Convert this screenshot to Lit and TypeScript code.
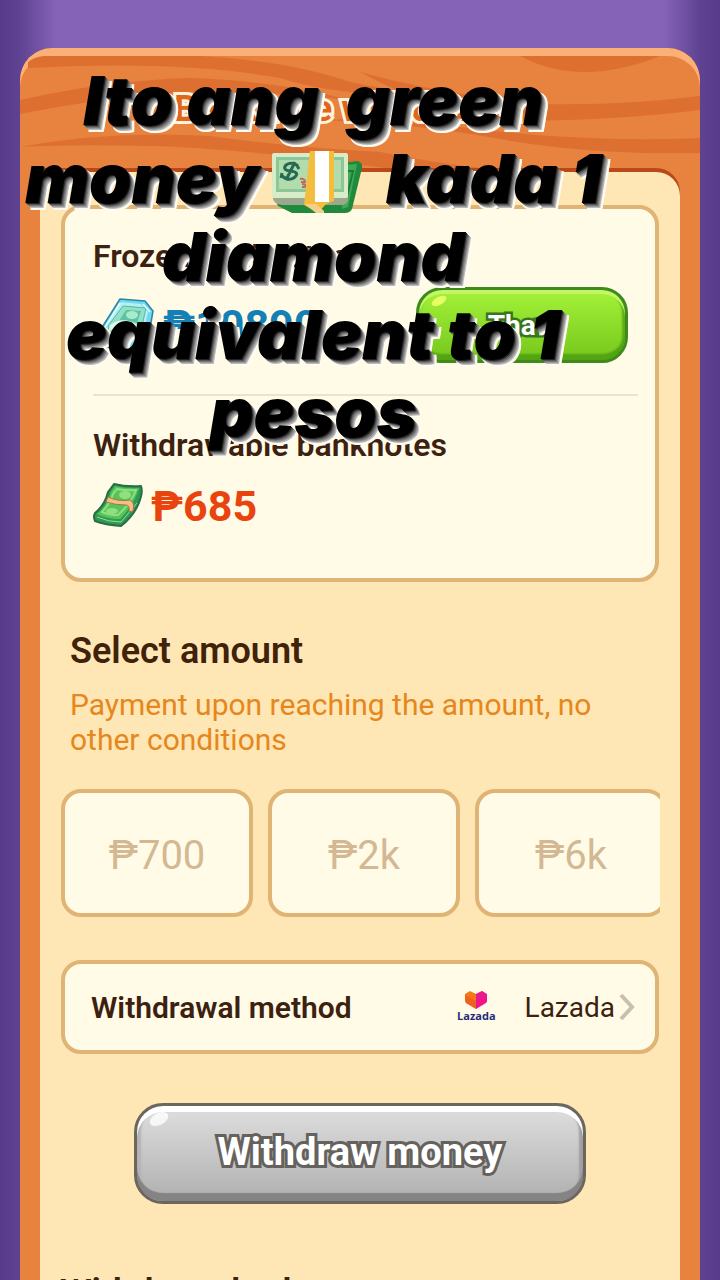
import { LitElement, html, css, svg } from "lit";
import { customElement, property } from "lit/decorators.js";

const cashEmoji = html`<svg class="emoji" viewBox="0 0 92 64" role="img" aria-label="Money">
  <path d="M70 12 L86 10 Q91 12 90 17 L80 58 Q78 62 73 62 H20 L6 55 L3 48 Z" fill="#1f8a3c"/>
  <path d="M72 14 L85 13 L76 56 L70 58 Z" fill="#3faa55"/>
  <path d="M76 20 L81 20 L74 50" fill="none" stroke="#1f7a38" stroke-width="2"/>
  <path d="M1 44 H76 V50 Q74 54 70 54 H10 Q2 53 1 48 Z" fill="#9aa88d"/>
  <rect x="0" y="2" width="76" height="45" rx="2" fill="#d9ecc8"/>
  <rect x="4" y="6" width="68" height="35" fill="#8cc79a"/>
  <rect x="7" y="9" width="62" height="29" fill="#b2dcab"/>
  <path d="M26 15 Q20 10 14 14 Q10 19 18 20 Q28 21 23 26 Q17 31 10 25 M23 11 L14 29 M24 13 l3 5 M10 22 l-1 5" fill="none" stroke="#246a54" stroke-width="3"/>
  <path d="M28 28 q5 -1 5 3 h-4 M30 33 q5 0 3 3 h-3" fill="none" stroke="#bb6b62" stroke-width="2"/>
  <path d="M38 0 H62 V50 L54 53 L46 62 L32 54 Z" fill="#f5bd3d"/>
  <path d="M43 0 H57 V51 H43 Z" fill="#fff"/>
  <path d="M33 53 H44 L52 60 V62 H44 Z" fill="#f3cf8c"/>
</svg>`;

const frozenNotes = svg`
  <path d="M21 2 L46 4 L54 14 L50 37 L32 54 L6 50 L2 32 Z" fill="#6fd8f2" stroke="#2c86a8" stroke-width="1.5" stroke-linejoin="round"/>
  <path d="M22 5 L42 7 L49 15 L45 34 L30 48 L9 46 L6 33 Z" fill="#b4f0ee"/>
  <path d="M24 9 L47 11 L43 29 L30 42 L11 40 L9 29 Z" fill="#93dfc8" stroke="#55b8a6"/>
  <path d="M27 13 L42 14 L38 26 Q26 22 18 27 Z" fill="#5cc4a0"/>
  <ellipse cx="33" cy="18" rx="6" ry="4" fill="#a8eccd"/>
  <path d="M11 28 Q24 18 40 29 L38 35 Q24 26 10 34 Z" fill="#e0faf4"/>
  <path d="M5 32 L21 6 M44 7 L51 15" stroke="#eaffff" stroke-width="1.5"/>`;

const cashNotes = svg`
  <path d="M21 1 Q33 4 48 3 Q50 9 47 17 Q42 32 28 43 Q12 42 2 38 Q0 34 2 30 Q12 22 15 9 Z" fill="#2f9a52" stroke="#2a6c45" stroke-width="2" stroke-linejoin="round"/>
  <path d="M22 3 Q34 6 46 5 Q41 22 27 36 Q13 36 4 31 Q14 23 18 9 Z" fill="#56c45c"/>
  <path d="M24 6 Q34 8 43 7 Q38 20 25 32 Q15 32 9 29 Q17 21 20 11 Z" fill="none" stroke="#92df7d" stroke-width="2"/>
  <ellipse cx="32" cy="12" rx="6" ry="4" fill="#92df7d"/>
  <ellipse cx="19" cy="28" rx="6" ry="3" fill="#92df7d"/>
  <path d="M4 34 Q15 39 28 39 L44 20" fill="none" stroke="#8fe08c"/>
  <path d="M15 14 Q26 19 37 17 Q42 19 40 28 L36 29 Q37 22 33 22 Q22 22 13 19 Z" fill="#f3bf83" stroke="#a87546"/>`;

@customElement("wood-header")
class WoodHeader extends LitElement {
  static styles = css`
    :host { display: block; position: relative; }
    .grain { position: absolute; inset: 0; width: 100%; height: 100%; }
    .title {
      position: relative; margin: 0; text-align: center; padding: 41px 24px 41px 0;
      font: 700 37px/40px Roboto, sans-serif; color: #e0671a;
      -webkit-text-stroke: 6px #fff3dc; paint-order: stroke fill; stroke-linejoin: round;
    }
  `;
  render() {
    return html`
      <svg class="grain" viewBox="0 0 680 122" preserveAspectRatio="none" aria-hidden="true">
        <g fill="#dd7031">
          <path d="M8 14 Q14 9 24 8 H180 Q270 13 330 34 Q390 46 430 47 Q320 50 260 30 Q160 12 8 20 Z"/>
          <path d="M0 52 Q90 32 170 30 Q260 33 330 52 Q240 42 160 44 Q80 50 0 66 Z"/>
          <path d="M500 8 H640 Q560 40 500 8 Z"/>
          <path d="M680 48 Q600 58 520 56 Q420 46 340 24 Q420 68 500 73 Q600 72 680 62 Z"/>
          <path d="M0 99 Q90 82 190 88 Q270 99 360 104 Q450 122 500 122 H380 Q220 100 130 98 Q50 96 0 99 Z"/>
          <path d="M680 90 Q560 95 440 79 Q380 68 300 72 Q400 76 480 91 Q570 107 680 105 Z"/>
        </g>
      </svg>
      <h1 class="title">Banknote withdrawal</h1>
    `;
  }
}

@customElement("amount-row")
class AmountRow extends LitElement {
  @property() label = "";
  @property() value = "";
  @property({ type: Boolean }) frozen = false;
  static styles = css`
    :host { display: block; }
    .label { margin: 0; font: 600 32px/36px Roboto, sans-serif; color: #3d2110; }
    .line { display: flex; align-items: center; height: 60px; margin-top: 13px; }
    .frozen { height: 76px; }
    .art { width: 50px; height: 46px; margin-right: 8px; flex: none; }
    .value { flex: 1; font: 700 43px/48px Roboto, sans-serif; color: #e9440d; }
    .frozen .art { width: 56px; height: 56px; margin: 0 8px 0 6px; }
    .frozen .value { color: #1580b6; }
  `;
  render() {
    return html`
      <h2 class="label">${this.label}</h2>
      <div class="line ${this.frozen ? "frozen" : ""}">
        <svg class="art" viewBox="0 0 ${this.frozen ? "56 56" : "50 46"}" aria-hidden="true">${this.frozen ? frozenNotes : cashNotes}</svg>
        <span class="value">${this.value}</span>
        <slot></slot>
      </div>
    `;
  }
}

@customElement("app-root")
class AppRoot extends LitElement {
  static styles = css`
    :host {
      display: block; position: relative; box-sizing: border-box; height: 100vh; overflow: hidden;
      padding: 48px 20px 0; font-family: Roboto, sans-serif; color: #3d2110;
      background:
        linear-gradient(90deg, #573a88 0, #5f4292 20px, transparent 56px, transparent calc(100% - 56px), #5f4292 calc(100% - 20px), #573a88 100%),
        #8563b7;
    }
    * { box-sizing: border-box; }
    button { font: inherit; color: inherit; margin: 0; padding: 0; cursor: pointer; }
    .board {
      height: 100%; border-radius: 32px 32px 0 0; background: #e8823f; overflow: hidden;
      padding: 0 20px; display: flex; flex-direction: column;
    }
    wood-header { margin: 0 -20px; flex: none; box-shadow: inset 0 8px 0 #fbb077; border-radius: 32px 32px 0 0; }
    .sheet {
      flex: 1; min-height: 0; overflow: hidden; margin-top: 2px; position: relative;
      border-radius: 0 24px 0 0; background: #fee6b5; box-shadow: 0 -4px 0 #b9491b;
      padding: 33px 20px 0;
    }
    .card { border: 4px solid #dfb475; border-radius: 20px; background: #fffbe7; margin: 0 1px; }
    .balances { padding: 29px 17px 42px 28px; }
    .rule { border: 0; border-top: 2px solid #ece2cf; margin: 31px 0; }
    .gloss { position: relative; text-align: center; font-weight: 700; color: #fff; paint-order: stroke fill; stroke-linejoin: round; }
    .gloss::before {
      content: ""; position: absolute; left: 12px; top: 7px; width: 20px; height: 12px;
      border-radius: 50%; transform: rotate(-28deg); background: #fffc;
    }
    .thaw {
      width: 212px; height: 76px; margin-right: 10px; border: 3px solid #3f8a1c; border-radius: 26px;
      font-size: 28px; -webkit-text-stroke: 5px #37761f;
      background: linear-gradient(#a4f238, #76c71d);
      box-shadow: inset 0 4px 0 #c3f568, inset 0 -6px 2px #53a313, inset 3px 0 2px #8add30, inset -3px 0 2px #5fae19;
    }
    .thaw::before { width: 16px; height: 8px; background: #e6ff66; }
    .section { margin: 0; font: 600 36px/42px Roboto, sans-serif; color: #40210a; }
    .pick { padding: 48px 10px 0; }
    .note { margin: 15px 0 0; font-size: 30px; line-height: 35px; color: #e6871c; }
    .amounts { display: flex; gap: 15px; margin-top: 32px; padding-left: 1px; overflow: hidden; }
    .amounts .amount { flex: 0 0 192px; height: 128px; margin: 0; padding-top: 5px; font-size: 40px; color: #d3b893; }
    .method { display: flex; align-items: center; width: calc(100% - 2px); height: 94px; text-align: left; font-size: 30px; }
    button.method { margin: 43px 1px 0; padding: 0 20px 0 26px; }
    .name { flex: 1; font-weight: 600; }
    .brand { display: flex; flex-direction: column; align-items: center; margin-right: 29px; font: 700 11px/14px "Open Sans", sans-serif; color: #252b78; }
    .choice { font-size: 28px; }
    .heart { width: 22px; height: 18px; }
    .chevron { width: 16px; height: 28px; margin-left: 4px; }
    .submit {
      display: block; width: 452px; max-width: 100%; height: 101px; border: 3px solid #6b675f; border-radius: 29px;
      font-size: 38px; -webkit-text-stroke: 6px #65625d;
      background: linear-gradient(#dadada 10%, #afafaf);
      box-shadow: inset 0 6px 0 #fff, inset 0 -8px 1px #848484, inset 4px 0 2px #b4b4b4, inset -4px 0 2px #a0a0a0;
    }
    button.submit { margin: 49px auto 68px; padding-bottom: 4px; }
    .caption {
      position: absolute; left: 0; top: 61px; width: 87%; margin: 0; text-align: center; white-space: pre;
      font: italic 900 68px/78px Inter, sans-serif; color: #000; pointer-events: none;
      text-shadow: 1px 1px #222, 2px 2px #555, 3px 3px #777, 4px 4px #999, 5px 5px #bbb,
        6px 6px #fffbf0, 7px 7px #fffbf0, 7px 5px #fffbf0, 5px 7px #fffbf0;
    }
    .emoji { width: 92px; height: 64px; margin-right: 8px; vertical-align: -12px; }
  `;

  render() {
    return html`
      <main class="board">
        <wood-header></wood-header>
        <div class="sheet">
          <section class="card balances">
            <amount-row label="Frozen banknotes" value="₱10890" frozen>
              <button class="gloss thaw">Thaw</button>
            </amount-row>
            <hr class="rule" />
            <amount-row label="Withdrawable banknotes" value="₱685"></amount-row>
          </section>
          <section>
            <div class="pick">
              <h2 class="section">Select amount</h2>
              <p class="note">Payment upon reaching the amount, no other conditions</p>
            </div>
            <div class="amounts">
              ${["₱700", "₱2k", "₱6k"].map((a) => html`<button class="card amount">${a}</button>`)}
            </div>
          </section>
          <button class="card method">
            <span class="name">Withdrawal method</span>
            <span class="brand">
              <svg class="heart" viewBox="0 0 22 18" aria-hidden="true">
                <path d="M0 3 L5 0 L11 3 V18 L1 12 Q0 11 0 10 Z" fill="#f57a16"/>
                <path d="M22 3 L17 0 L11 3 V18 L21 12 Q22 11 22 10 Z" fill="#f0148c"/>
                <path d="M0 4 L11 10 V18 L1 12 Z" fill="#e8502a" opacity=".6"/>
                <path d="M11 3 L11 10 L22 4 L17 0 Z" fill="#e0208f" opacity=".5"/>
              </svg>
              Lazada
            </span>
            <span class="choice">Lazada</span>
            <svg class="chevron" viewBox="0 0 16 28" aria-hidden="true">
              <path d="M2 2 L13 14 L2 26" fill="none" stroke="#c9bfae" stroke-width="4"/>
            </svg>
          </button>
          <button class="gloss submit">Withdraw money</button>
          <h2 class="section">Withdrawal rules</h2>
        </div>
      </main>
      <p class="caption">Ito ang  green
money ${cashEmoji} kada 1
diamond
equivalent to 1
pesos</p>
    `;
  }
}
